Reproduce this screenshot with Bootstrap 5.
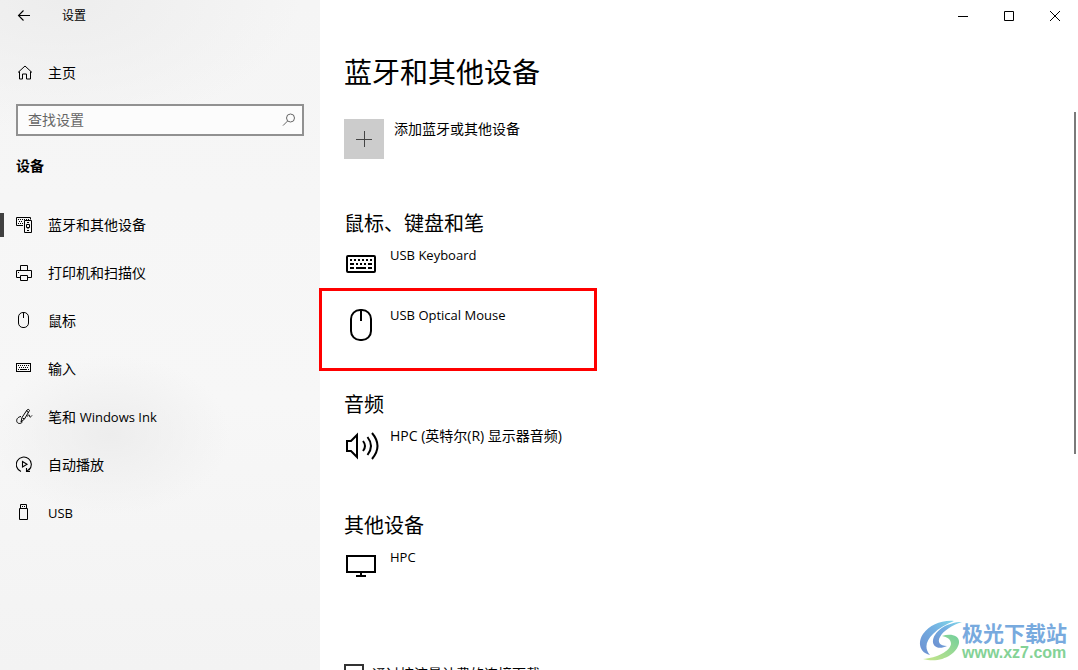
<!DOCTYPE html>
<html lang="zh-CN">
<head>
<meta charset="utf-8">
<meta name="viewport" content="width=device-width, initial-scale=1">
<title>设置</title>
<link href="https://cdn.jsdelivr.net/npm/bootstrap@5.3.0/dist/css/bootstrap.min.css" rel="stylesheet">
<style>
  body { font-family: "Open Sans", "Noto Sans CJK SC", sans-serif; font-size: 14px; line-height: 20px; color: #000; background: #fff; }
  svg { display: block; fill: none; stroke: #000; flex: none; }
  button { color: #000; }
  .sidebar {
    width: 320px;
    background:
      radial-gradient(ellipse 120px 80px at 110px 435px, #ededed, #ededed00),
      radial-gradient(ellipse 240px 130px at 60px 0, #ededed, #ededed00),
      linear-gradient(#f5f5f5, #f7f7f7 60%, #f3f3f3);
  }
  .titlebar { height: 32px; }
  .app-name { font-size: 12px; margin-left: 14px; }
  .back-btn { width: 48px; height: 32px; }
  .win-btn { width: 46px; height: 32px; }
  .side-link { height: 48px; color: #000; text-decoration: none; gap: 15px; padding-left: 16px; }
  .home-link { margin-top: 17px; }
  .side-link svg { width: 17px; height: 18px; }
  .side-link.current::before { content: ""; position: absolute; left: 0; width: 4px; height: 24px; background: #404040; }
  .search-box { margin: 7px 16px 0; height: 32px; border: 2px solid #919191; background: #fcfcfc; padding: 0 6px 0 10px; }
  .search-box input { border: 0; background: none; outline: 0; padding: 0; min-width: 0; font-size: 14px; line-height: 20px; }
  .search-box input::placeholder { color: #666; opacity: 1; }
  .search-box svg { stroke: #666; }
  .side-title { font-size: 14px; line-height: 20px; margin: 20px 16px 25px; }
  .content { padding: 20px 24px 0; }
  .page-title { font-size: 28px; line-height: 40px; font-weight: 400; margin: 0 0 27px; }
  .add-tile { width: 40px; height: 40px; background: #ccc; }
  .add-device { margin-bottom: 50px; gap: 10px; font-size: 14px; line-height: 20px; }
  .group-title { font-size: 20px; line-height: 30px; font-weight: 400; margin: 0 0 6px; }
  .device-group { margin-bottom: 25px; }
  .device { height: 60px; gap: 10px; }
  .latin { font-size: 13px; }
  .callout-frame { position: absolute; left: -25px; top: -17px; width: 278px; height: 83px; border: 3px solid #f00; pointer-events: none; }
  .metered { margin-top: 57px; gap: 8px; }
  .metered input { appearance: none; width: 20px; height: 20px; border: 2px solid #333; margin: 0; background: #fff; flex: none; }
  .scroll-thumb { position: absolute; right: 2px; top: 112px; width: 2px; height: 51vh; background: #7a7a7a; }
  .site-mark { position: absolute; right: 11px; bottom: 8px; }
  .site-name { font-family: "Noto Sans CJK SC", sans-serif; font-weight: 700; font-size: 21px; line-height: 24px; color: #78aade; }
  .site-url { font-family: "Liberation Sans", sans-serif; font-weight: 700; font-size: 16px; line-height: 18px; color: #84d296; }
</style>
</head>
<body>
<div class="d-flex vh-100 overflow-hidden position-relative">
  <aside class="sidebar flex-shrink-0">
    <div class="titlebar d-flex align-items-center">
      <button class="back-btn btn p-0 border-0 d-flex align-items-center justify-content-center" type="button" aria-label="返回">
        <svg width="14" height="12" viewBox="0 0 14 12"><path d="M13 5.500H1.500M6.500.5l-5 5 5 5" stroke-width="1.1"/></svg>
      </button>
      <span class="app-name">设置</span>
    </div>
    <a class="side-link home-link d-flex align-items-center" href="#">
      <svg viewBox="0 0 17 18"><path d="M2 8.500L9 2l7 6.500M3.500 7.500v7.500h3v-5h4v5h4V7.500"/></svg>
      <span>主页</span>
    </a>
    <div class="search-box d-flex align-items-center">
      <input class="flex-grow-1" type="text" placeholder="查找设置" aria-label="查找设置">
      <svg width="14" height="14" viewBox="0 0 14 14"><circle cx="8.500" cy="5" r="4"/><path d="M5.600 8L1 12.600"/></svg>
    </div>
    <h2 class="side-title fw-bold">设备</h2>
    <nav>
      <a class="side-link current position-relative d-flex align-items-center" href="#" aria-current="page">
        <svg viewBox="0 0 17 18"><path d="M7 9.500H.5v-8h14v2"/><path d="M2 3.500h11M3 5.500h4M2 7.500h5" stroke-dasharray="1 1"/><path d="M8.500 4.500h7v12h-7z"/><path d="M11 6.500h2M10.500 8.500h3v3h-3zM12 11v2M11 14.500h2"/></svg>
        <span>蓝牙和其他设备</span>
      </a>
      <a class="side-link d-flex align-items-center" href="#">
        <svg viewBox="0 0 17 18"><path d="M4.500 6.500v-5h7v5M4.500 13.500h-4v-7h15v7h-4M4.500 11.500h7v5h-7zM2 8.500h1"/></svg>
        <span>打印机和扫描仪</span>
      </a>
      <a class="side-link d-flex align-items-center" href="#">
        <svg viewBox="0 0 17 18"><rect x="2.500" y=".5" width="10" height="15" rx="4.500"/><path d="M7.500 1v5"/></svg>
        <span>鼠标</span>
      </a>
      <a class="side-link d-flex align-items-center" href="#">
        <svg viewBox="0 0 17 18"><rect x=".5" y="3.500" width="14" height="8"/><path d="M2 5.500h11M3 7.500h10" stroke-dasharray="1 1"/><path d="M2 9.500h1M4 9.500h7M12 9.500h1"/></svg>
        <span>输入</span>
      </a>
      <a class="side-link d-flex align-items-center" href="#">
        <svg viewBox="0 0 17 18"><path d="M5 14l1-4.500 5-7.500q2-1.500 2.500.5L8.500 11zM6.500 10l2 1M10.500 3l2 1.500M5 8.500C1.500 9 .3 11.500.8 13.500c.8 2.500 3.700 2.500 5.700.5M11 8.500c2-2 2.500-2 2.500-.5s1 1.500 2.500-.5"/></svg>
        <span>笔和 <span class="latin">Windows Ink</span></span>
      </a>
      <a class="side-link d-flex align-items-center" href="#">
        <svg viewBox="0 0 17 18"><path d="M5 15.500A7.500 7.500 0 1 1 13 14M10.500 12v3.500H14M10.800 15.300l3-2.800M6.500 5.500V11L11 8.250z" stroke-width="1.1"/></svg>
        <span>自动播放</span>
      </a>
      <a class="side-link d-flex align-items-center" href="#">
        <svg viewBox="0 0 17 18"><path d="M4.500 4.500v-4h6v4M3.500 4.500h8v11h-8zM6 2.500h1M8 2.500h1"/></svg>
        <span class="latin">USB</span>
      </a>
    </nav>
  </aside>

  <main class="flex-grow-1">
    <div class="titlebar d-flex justify-content-end">
      <button class="win-btn btn p-0 border-0 d-flex align-items-center justify-content-center" type="button" aria-label="最小化"><svg width="10" height="10" viewBox="0 0 10 10"><path d="M0 5.500h10"/></svg></button>
      <button class="win-btn btn p-0 border-0 d-flex align-items-center justify-content-center" type="button" aria-label="最大化"><svg width="10" height="10" viewBox="0 0 10 10"><path d="M.5.5h9v9h-9z"/></svg></button>
      <button class="win-btn btn p-0 border-0 d-flex align-items-center justify-content-center" type="button" aria-label="关闭"><svg width="10" height="10" viewBox="0 0 10 10"><path d="M0 0l10 10M10 0L0 10"/></svg></button>
    </div>
    <div class="content">
      <h1 class="page-title">蓝牙和其他设备</h1>
      <button class="add-device btn p-0 border-0 rounded-0 d-flex align-items-start" type="button">
        <span class="add-tile d-flex align-items-center justify-content-center"><svg width="16" height="16" viewBox="0 0 16 16"><path d="M0 8.500h16M8.500 0v16" stroke="#444"/></svg></span>
        <span class="text-black">添加蓝牙或其他设备</span>
      </button>

      <section class="device-group">
        <h2 class="group-title">鼠标、键盘和笔</h2>
        <div class="device d-flex align-items-start">
          <svg width="36" height="40" viewBox="0 0 36 40"><rect x="3" y="11" width="28" height="16" rx="1" stroke-width="2"/><path d="M6 15h2M10 15h2M14 15h2M18 15h2M22 15h2M26 15h2M6 19h4M12 19h2M16 19h2M20 19h2M24 19h4M6 23h4M12 23h10M24 23h4" stroke-width="2"/></svg>
          <span class="latin">USB Keyboard</span>
        </div>
        <div class="device d-flex align-items-start position-relative">
          <svg width="36" height="40" viewBox="0 0 36 40"><rect x="7" y="5" width="20" height="30" rx="9" stroke-width="2"/><path d="M17 5v11" stroke-width="2"/></svg>
          <span class="latin">USB Optical Mouse</span>
          <div class="callout-frame"></div>
        </div>
      </section>

      <section class="device-group">
        <h2 class="group-title">音频</h2>
        <div class="device d-flex align-items-start">
          <svg width="36" height="40" viewBox="0 0 36 40" stroke-width="2"><path d="M3 15h4l6-6v22l-6-6H3zM19 15q4 5 0 10M23.500 11q7 9 0 18M28 7q11 13 0 26"/></svg>
          <span>HPC (英特尔(R) 显示器音频)</span>
        </div>
      </section>

      <section class="device-group">
        <h2 class="group-title">其他设备</h2>
        <div class="device d-flex align-items-start">
          <svg width="36" height="40" viewBox="0 0 36 40" stroke-width="2"><path d="M3 9h28v16H3zM17 25v4M12 29h10"/></svg>
          <span class="latin">HPC</span>
        </div>
      </section>

      <div class="metered d-flex align-items-start">
        <input type="checkbox" id="metered">
        <label for="metered">通过按流量计费的连接下载</label>
      </div>
    </div>
  </main>

  <div class="scroll-thumb"></div>
  <div class="site-mark d-flex align-items-center">
    <svg width="43" height="42" viewBox="0 0 43 42" style="stroke:none">
      <defs>
        <linearGradient id="blueSwirl" x1="0" y1="1" x2="1" y2="0"><stop offset="0" stop-color="#6d8fd0"/><stop offset=".6" stop-color="#73b0e2"/><stop offset="1" stop-color="#7fd6e8"/></linearGradient>
        <linearGradient id="greenSwirl" x1="0" y1="1" x2="1" y2="0"><stop offset="0" stop-color="#c9e68a"/><stop offset="1" stop-color="#72cf9c"/></linearGradient>
      </defs>
      <path fill="url(#blueSwirl)" d="M35 1C22 0 11 5 4 14C-2 23 1 33 11 35C5 28 7 21 14 14C20 8 27 4 35 1z"/>
      <path fill="url(#blueSwirl)" d="M43 2C29 2 16 10 14 20C13 27 20 30 28 26C21 26 18 22 21 17C24 11 33 5 43 2z"/>
      <path fill="url(#greenSwirl)" d="M23 16C31 13 41 15 40 23C38 34 22 44 4 39C18 38 31 31 32 24C32 19 28 17 23 16z"/>
    </svg>
    <div>
      <div class="site-name">极光下载站</div>
      <div class="site-url">www.xz7.com</div>
    </div>
  </div>
</div>
<script src="https://cdn.jsdelivr.net/npm/bootstrap@5.3.0/dist/js/bootstrap.bundle.min.js"></script>
</body>
</html>
